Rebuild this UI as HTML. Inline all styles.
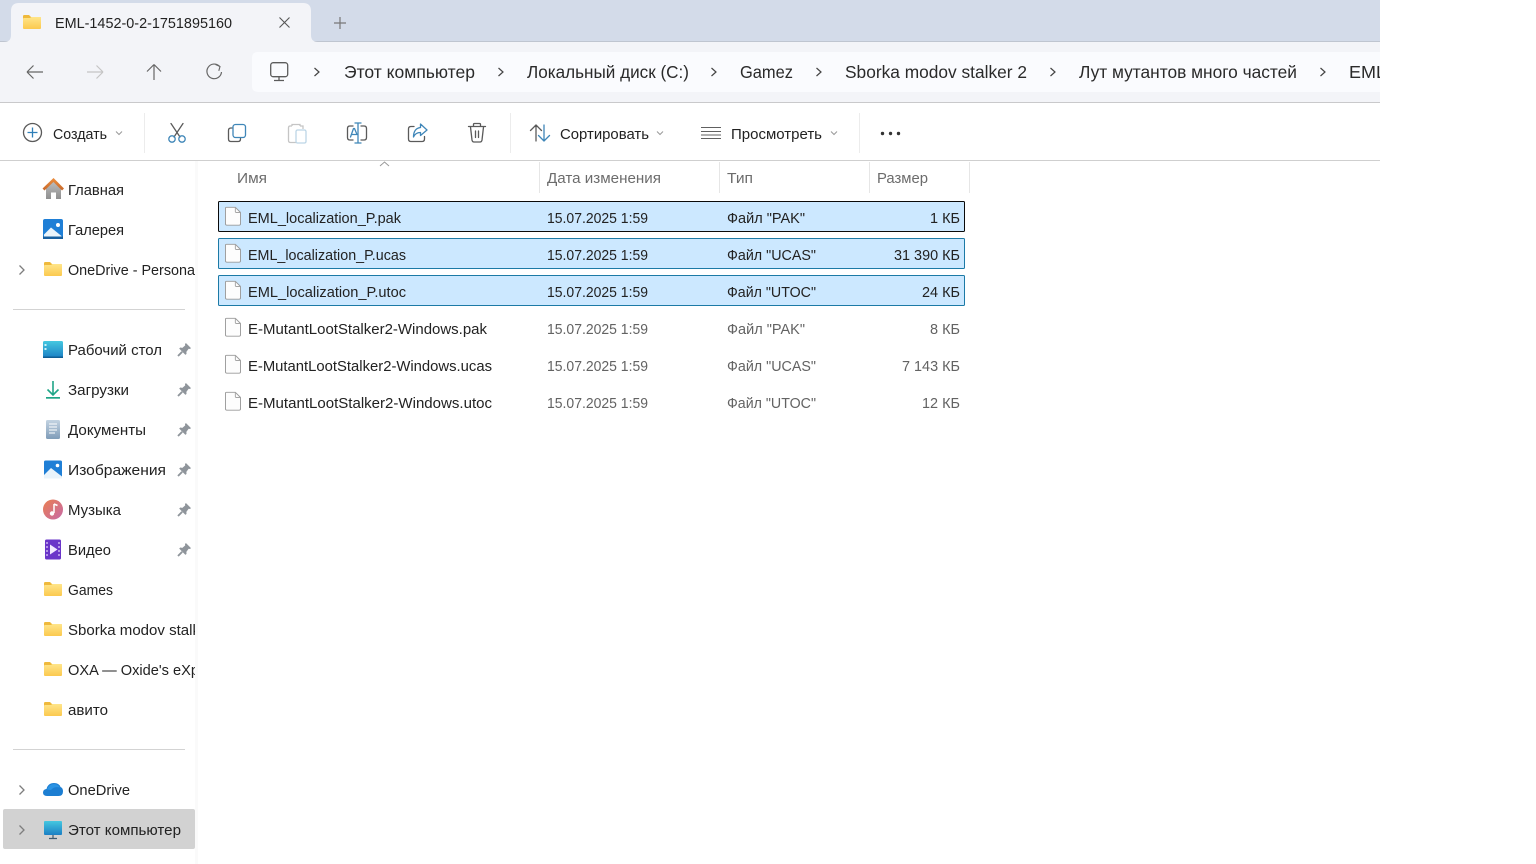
<!DOCTYPE html>
<html lang="ru"><head><meta charset="utf-8"><title>EML-1452-0-2-1751895160</title>
<style>
html,body{margin:0;padding:0;background:#fff;width:1536px;height:864px;overflow:hidden}
svg{display:block}
text{font-family:"Liberation Sans","DejaVu Sans",sans-serif;font-size:14.5px;fill:#222}
.addr{font-size:17.5px;fill:#2a2a2a}
.hd{fill:#6c6c6c}
.g{fill:#636363}
.ic{fill:none;stroke:#5a5a5a;stroke-width:1.3;stroke-linecap:round;stroke-linejoin:round}
.bl{fill:none;stroke:#3f86b8;stroke-width:1.3;stroke-linecap:round;stroke-linejoin:round}
</style></head><body>
<svg width="1536" height="864" viewBox="0 0 1536 864" xmlns="http://www.w3.org/2000/svg">
<defs>
<linearGradient id="fg" x1="0" y1="0" x2="0" y2="1"><stop offset="0" stop-color="#ffe58a"/><stop offset="1" stop-color="#fbc94f"/></linearGradient>
<linearGradient id="mon" x1="0" y1="0" x2="0" y2="1"><stop offset="0" stop-color="#45c8e0"/><stop offset="1" stop-color="#1a7fc4"/></linearGradient>
<linearGradient id="mus" x1="0" y1="0" x2="1" y2="1"><stop offset="0" stop-color="#ea7f50"/><stop offset="1" stop-color="#c76aa8"/></linearGradient>
<linearGradient id="doc" x1="0" y1="0" x2="0" y2="1"><stop offset="0" stop-color="#c3d3e2"/><stop offset="1" stop-color="#7f9cb8"/></linearGradient>
<linearGradient id="roof" x1="0" y1="0" x2="0" y2="1"><stop offset="0" stop-color="#e88a3c"/><stop offset="1" stop-color="#c9692a"/></linearGradient>
<linearGradient id="house" x1="0" y1="0" x2="0" y2="1"><stop offset="0" stop-color="#bdbdbd"/><stop offset="1" stop-color="#8f8f8f"/></linearGradient>
<symbol id="folder" viewBox="0 0 18 14" overflow="visible">
<path d="M0 1.2Q0 0 1.2 0H6L8 2H16.8Q18 2 18 3.2V5H0Z" fill="#efb93c"/>
<path d="M0 4Q0 3 1 3L7 3 8.500 2H17Q18 2 18 3V13Q18 14 17 14H1Q0 14 0 13Z" fill="url(#fg)"/>
</symbol>
<symbol id="file" viewBox="0 0 17 20" overflow="visible">
<path d="M1.500 .5H11L16.500 6V18Q16.500 19.500 15 19.500H2Q.5 19.500 .5 18V1.500Q.5 .5 1.500 .5Z" fill="#fdfdfd" stroke="#9a9a9a" stroke-width="1"/>
<path d="M11 .5V5Q11 6 12 6H16.500" fill="none" stroke="#a5a5a5" stroke-width="1"/>
</symbol>
<symbol id="pin" viewBox="0 0 14 14" overflow="visible">
<path d="M8.500 0L14 5.500 12.800 6.500 11.500 6.200 9 9.500 9.200 11.700 8 12.800 1.300 6 2.400 4.900 4.700 5.200 7.800 2.500 7.500 1.200Z" fill="#8f959b"/>
<path d="M4.500 9.500L0 14" stroke="#8f959b" stroke-width="2"/>
</symbol>
<symbol id="chev" viewBox="0 0 8 12" overflow="visible">
<path d="M1.500 1.500L6 6 1.500 10.500" fill="none" stroke="#7e7e7e" stroke-width="1.300"/>
</symbol>
<symbol id="achev" viewBox="0 0 8 12" overflow="visible">
<path d="M1.500 2L6 6 1.500 10" fill="none" stroke="#444" stroke-width="1.200"/>
</symbol>
<clipPath id="navclip"><rect x="0" y="160" width="195" height="704"/></clipPath>
<clipPath id="winclip"><rect x="0" y="0" width="1380" height="864"/></clipPath>
</defs>

<!-- chrome -->
<rect x="0" y="0" width="1380" height="41" fill="#d3dbe9"/>
<rect x="0" y="41" width="1380" height="1" fill="#bfc5d0"/>
<rect x="0" y="42" width="1380" height="60" fill="#f3f4f8"/>
<rect x="0" y="102" width="1380" height="1" fill="#c9c9cb"/>
<rect x="0" y="160" width="1380" height="1" fill="#cfcfcf"/>

<!-- tab -->
<path d="M4 42Q11 42 11 35V11Q11 3 19 3H303Q311 3 311 11V35Q311 42 318 42Z" fill="#f3f4f8"/>
<use href="#folder" x="23" y="15" width="18" height="14"/>
<text x="55" y="28" textLength="177" lengthAdjust="spacingAndGlyphs">EML-1452-0-2-1751895160</text>
<path d="M279.500 17.500L289.500 27.500M289.500 17.500L279.500 27.500" fill="none" stroke="#555" stroke-width="1.100"/>
<path d="M340 17V29M334 23H346" fill="none" stroke="#777" stroke-width="1.200"/>

<!-- nav buttons -->
<path d="M27 72H43M27 72L33.500 65.500M27 72L33.500 78.500" fill="none" stroke="#666" stroke-width="1.200"/>
<path d="M87 72H103M103 72L96.500 65.500M103 72L96.500 78.500" fill="none" stroke="#c4c4c4" stroke-width="1.200"/>
<path d="M154 80V65M154 64.500L147 71.500M154 64.500L161 71.500" fill="none" stroke="#666" stroke-width="1.200"/>
<path d="M219.500 66.300A7.300 7.300 0 1 0 221.500 72" fill="none" stroke="#666" stroke-width="1.200"/>
<path d="M215.500 64.500L220 66.500 218.800 70.800" fill="none" stroke="#666" stroke-width="1.100"/>

<!-- address bar -->
<path d="M1380 52H258Q252 52 252 58V86Q252 92 258 92H1380Z" fill="#fafbfe"/>
<rect x="270.700" y="62.700" width="17" height="14" rx="2.500" fill="none" stroke="#5c5c5c" stroke-width="1.300"/>
<path d="M279 77V80M274 80.500H284" fill="none" stroke="#5c5c5c" stroke-width="1.300"/>
<g clip-path="url(#winclip)">
<use href="#achev" x="313" y="66" width="8" height="12"/>
<text class="addr" x="344" y="78" textLength="131" lengthAdjust="spacingAndGlyphs">Этот компьютер</text>
<use href="#achev" x="497" y="66" width="8" height="12"/>
<text class="addr" x="527" y="78" textLength="162" lengthAdjust="spacingAndGlyphs">Локальный диск (C:)</text>
<use href="#achev" x="710" y="66" width="8" height="12"/>
<text class="addr" x="740" y="78" textLength="53" lengthAdjust="spacingAndGlyphs">Gamez</text>
<use href="#achev" x="815" y="66" width="8" height="12"/>
<text class="addr" x="845" y="78" textLength="182" lengthAdjust="spacingAndGlyphs">Sborka modov stalker 2</text>
<use href="#achev" x="1049" y="66" width="8" height="12"/>
<text class="addr" x="1079" y="78" textLength="218" lengthAdjust="spacingAndGlyphs">Лут мутантов много частей</text>
<use href="#achev" x="1319" y="66" width="8" height="12"/>
<text class="addr" x="1349" y="78" textLength="37" lengthAdjust="spacingAndGlyphs">EML</text>
</g>

<!-- toolbar -->
<circle cx="32.500" cy="132.500" r="9" fill="none" stroke="#5a5a5a" stroke-width="1.300"/>
<path d="M32.500 127.500V137.500M27.500 132.500H37.500" fill="none" stroke="#2f7fb8" stroke-width="1.300"/>
<text x="53" y="139" textLength="54" lengthAdjust="spacingAndGlyphs">Создать</text>
<path d="M116 131.500L119 134.500 122 131.500" fill="none" stroke="#999" stroke-width="1"/>
<rect x="144" y="113" width="1" height="40" fill="#ececec"/>

<!-- cut -->
<path d="M171 123.500L180 137M183 123.500L174 137" class="ic"/>
<circle cx="172" cy="139" r="3.200" class="bl"/><circle cx="182" cy="139" r="3.200" class="bl"/>
<!-- copy -->
<path d="M232 128H231Q228.500 128 228.500 130.500V139Q228.500 141.500 231 141.500H238Q240.500 141.500 240.500 139V138.500" class="ic"/>
<rect x="233" y="124.500" width="12.500" height="13" rx="2.500" class="bl"/>
<!-- paste -->
<path d="M292 126H290Q288.500 126 288.500 128V140.500Q288.500 142.500 290.500 142.500H296" fill="none" stroke="#c5c5c5" stroke-width="1.300"/>
<path d="M292 126V124.500H300V126M300 126H303V129" fill="none" stroke="#c5c5c5" stroke-width="1.300"/>
<rect x="296" y="130" width="10" height="13" rx="1.500" fill="none" stroke="#bcd5e6" stroke-width="1.300"/>
<!-- rename -->
<path d="M353 126H350Q347.500 126 347.500 128.500V137.500Q347.500 140 350 140H353" class="ic"/>
<path d="M361 126H364Q366.500 126 366.500 128.500V137.500Q366.500 140 364 140H361" class="ic"/>
<path d="M358 123V143M355 123H361M355 143H361" class="bl"/>
<path d="M350.500 137L353.500 128.500H354.500L357 134.500M351.500 134.500H356.500" class="bl"/>
<!-- share -->
<path d="M414 126.500H411Q408.500 126.500 408.500 129V139Q408.500 141.500 411 141.500H422Q424.500 141.500 424.500 139V136.500" class="ic"/>
<path d="M420.500 124L427 130 420.500 135.500V132.500Q415.500 132.500 413.500 137 413.500 128.500 420.500 127.500Z" class="bl"/>
<!-- delete -->
<path d="M468.500 126.500H485.500M473.500 126V124.500Q473.500 123.500 474.500 123.500H479.500Q480.500 123.500 480.500 124.500V126M470.500 127L472 140Q472.300 142 474 142H480Q481.700 142 482 140L483.500 127" class="ic"/>
<path d="M475.500 131V137.500M478.500 131V137.500" class="ic"/>
<rect x="510" y="113" width="1" height="40" fill="#ececec"/>

<!-- sort -->
<path d="M536 141V126M536 125L530.500 130.500M536 125L541.500 130.500" class="ic"/>
<path d="M544 125V140M544 141L538.500 135.500M544 141L549.500 135.500" class="bl"/>
<text x="560" y="139" textLength="89" lengthAdjust="spacingAndGlyphs">Сортировать</text>
<path d="M657 131.500L660 134.500 663 131.500" fill="none" stroke="#999" stroke-width="1"/>
<path d="M701 127.500H721M701 131.500H721M701 135H721M701 138.500H721" fill="none" stroke="#606060" stroke-width="1.100"/>
<text x="731" y="139" textLength="91" lengthAdjust="spacingAndGlyphs">Просмотреть</text>
<path d="M831 131.500L834 134.500 837 131.500" fill="none" stroke="#999" stroke-width="1"/>
<rect x="859" y="113" width="1" height="40" fill="#ececec"/>
<circle cx="882.500" cy="133.500" r="1.700" fill="#333"/><circle cx="890.500" cy="133.500" r="1.700" fill="#333"/><circle cx="898.500" cy="133.500" r="1.700" fill="#333"/>

<!-- nav pane -->
<rect x="195" y="161" width="3" height="703" fill="#fafafa"/>
<g clip-path="url(#navclip)">
<rect x="3" y="809" width="192" height="40" rx="2" fill="#d2d2d2"/>

<!-- home -->
<path d="M46 188V199H51V192.500H56V199H61V188L53.500 181Z" fill="url(#house)"/>
<path d="M43.500 189.500L53.500 180 63 189.500" fill="none" stroke="url(#roof)" stroke-width="2.800"/>
<text x="68" y="195" textLength="56" lengthAdjust="spacingAndGlyphs">Главная</text>

<!-- gallery -->
<rect x="43" y="219" width="20" height="20" rx="2" fill="#1f7fd6"/>
<path d="M44 234.500L51 227.500 61.500 236V237.500H44Z" fill="#eaf4fb"/>
<circle cx="58" cy="225" r="2" fill="#fff"/>
<rect x="43" y="236.500" width="20" height="2.500" fill="#175f9f"/>
<text x="68" y="235" textLength="56" lengthAdjust="spacingAndGlyphs">Галерея</text>

<use href="#chev" x="18" y="264" width="8" height="12"/>
<use href="#folder" x="44" y="262" width="18" height="14"/>
<text x="68" y="275" textLength="127" lengthAdjust="spacingAndGlyphs">OneDrive - Persona</text>

<rect x="13" y="309" width="172" height="1" fill="#d3d3d3"/>

<!-- desktop -->
<rect x="43" y="341" width="20" height="17" rx="1.500" fill="url(#mon)"/>
<rect x="44.500" y="344" width="2" height="2" fill="#cdf2f7"/><rect x="44.500" y="348" width="2" height="2" fill="#cdf2f7"/>
<rect x="43" y="356.500" width="20" height="1.500" fill="#0f5d94"/>
<text x="68" y="355" textLength="94" lengthAdjust="spacingAndGlyphs">Рабочий стол</text>
<use href="#pin" x="178" y="343" width="13" height="13"/>

<!-- downloads -->
<path d="M53 381V395M47.500 389.500L53 395 58.500 389.500" fill="none" stroke="#1fa587" stroke-width="1.600"/>
<rect x="46" y="397" width="14" height="1.700" fill="#1fa587"/>
<text x="68" y="395" textLength="61" lengthAdjust="spacingAndGlyphs">Загрузки</text>
<use href="#pin" x="178" y="383" width="13" height="13"/>

<!-- documents -->
<rect x="46" y="420" width="14" height="19" rx="1.500" fill="url(#doc)"/>
<path d="M49 424H57M49 427H57M49 430H57M49 433H55" stroke="#fff" stroke-width="1"/>
<text x="68" y="435" textLength="78" lengthAdjust="spacingAndGlyphs">Документы</text>
<use href="#pin" x="178" y="423" width="13" height="13"/>

<!-- pictures -->
<rect x="44" y="460.500" width="18" height="18" rx="1.500" fill="#1f7fd6"/>
<path d="M44 475L51 468 62 476.500V478.500H44Z" fill="#eaf4fb"/>
<circle cx="57.500" cy="465.500" r="1.800" fill="#fff"/>
<text x="68" y="475" textLength="98" lengthAdjust="spacingAndGlyphs">Изображения</text>
<use href="#pin" x="178" y="463" width="13" height="13"/>

<!-- music -->
<circle cx="53" cy="509.500" r="10" fill="url(#mus)"/>
<path d="M54 504V513M54 504L57.500 505.500" fill="none" stroke="#fff" stroke-width="1.500"/>
<circle cx="52" cy="513.500" r="2.200" fill="#fff"/>
<text x="68" y="515" textLength="53" lengthAdjust="spacingAndGlyphs">Музыка</text>
<use href="#pin" x="178" y="503" width="13" height="13"/>

<!-- video -->
<rect x="45" y="539.500" width="16" height="20" rx="1.500" fill="#6a35c9"/>
<path d="M50 544.500L57.500 549.500 50 554.500Z" fill="#f2e9ff"/>
<path d="M47 542V557" stroke="#c9b3ef" stroke-width="1.500" stroke-dasharray="2 2"/>
<path d="M59 542V557" stroke="#c9b3ef" stroke-width="1.500" stroke-dasharray="2 2"/>
<text x="68" y="555" textLength="43" lengthAdjust="spacingAndGlyphs">Видео</text>
<use href="#pin" x="178" y="543" width="13" height="13"/>

<use href="#folder" x="44" y="582" width="18" height="14"/>
<text x="68" y="595" textLength="45" lengthAdjust="spacingAndGlyphs">Games</text>
<use href="#folder" x="44" y="622" width="18" height="14"/>
<text x="68" y="635" textLength="132" lengthAdjust="spacingAndGlyphs">Sborka modov stalk</text>
<use href="#folder" x="44" y="662" width="18" height="14"/>
<text x="68" y="675" textLength="131" lengthAdjust="spacingAndGlyphs">OXA — Oxide's eXp</text>
<use href="#folder" x="44" y="702" width="18" height="14"/>
<text x="68" y="715" textLength="40" lengthAdjust="spacingAndGlyphs">авито</text>

<rect x="13" y="749" width="172" height="1" fill="#d3d3d3"/>

<!-- onedrive -->
<path d="M47 796Q43 796 43 792.500 43 789.500 46.500 789 48 783 54 783 59 783 60.500 787 63 787.800 63 791.500 63 796 58.500 796Z" fill="#1c7ed2"/>
<path d="M47 789.500Q49 784 54 784 58 784 60 787.500 54 786 51 790Z" fill="#2a93e4"/>
<use href="#chev" x="18" y="784" width="8" height="12"/>
<text x="68" y="795" textLength="62" lengthAdjust="spacingAndGlyphs">OneDrive</text>

<!-- this pc -->
<use href="#chev" x="18" y="824" width="8" height="12"/>
<rect x="44" y="821" width="18" height="14" rx="1" fill="url(#mon)"/>
<path d="M53 835V838M49 838.500H57" stroke="#3d5a70" stroke-width="1.200"/>
<text x="68" y="835" textLength="113" lengthAdjust="spacingAndGlyphs">Этот компьютер</text>
</g>

<!-- headers -->
<path d="M380 166L384.500 162 389 166" fill="none" stroke="#999" stroke-width="1"/>
<rect x="539" y="162" width="1" height="31" fill="#e6e6e6"/>
<rect x="719" y="162" width="1" height="31" fill="#e6e6e6"/>
<rect x="869" y="162" width="1" height="31" fill="#e6e6e6"/>
<rect x="969" y="162" width="1" height="31" fill="#e6e6e6"/>
<text class="hd" x="237" y="183" textLength="30" lengthAdjust="spacingAndGlyphs">Имя</text>
<text class="hd" x="547" y="183" textLength="114" lengthAdjust="spacingAndGlyphs">Дата изменения</text>
<text class="hd" x="727" y="183" textLength="26" lengthAdjust="spacingAndGlyphs">Тип</text>
<text class="hd" x="877" y="183" textLength="51" lengthAdjust="spacingAndGlyphs">Размер</text>

<!-- rows -->
<rect x="218.500" y="201.500" width="746" height="30" rx="1" fill="#cce8ff" stroke="#0a0a0a"/>
<rect x="218.500" y="238.500" width="746" height="30" rx="1" fill="#cce8ff" stroke="#1c7aa6"/>
<rect x="218.500" y="275.500" width="746" height="30" rx="1" fill="#cce8ff" stroke="#1c7aa6"/>

<use href="#file" x="225" y="206.500" width="16" height="19.500"/>
<text x="248" y="223" textLength="153" lengthAdjust="spacingAndGlyphs">EML_localization_P.pak</text>
<text x="547" y="223" textLength="101" lengthAdjust="spacingAndGlyphs">15.07.2025 1:59</text>
<text x="727" y="223" textLength="78" lengthAdjust="spacingAndGlyphs">Файл "PAK"</text>
<text x="930" y="223" textLength="30" lengthAdjust="spacingAndGlyphs">1 КБ</text>

<use href="#file" x="225" y="243.500" width="16" height="19.500"/>
<text x="248" y="260" textLength="158" lengthAdjust="spacingAndGlyphs">EML_localization_P.ucas</text>
<text x="547" y="260" textLength="101" lengthAdjust="spacingAndGlyphs">15.07.2025 1:59</text>
<text x="727" y="260" textLength="89" lengthAdjust="spacingAndGlyphs">Файл "UCAS"</text>
<text x="894" y="260" textLength="66" lengthAdjust="spacingAndGlyphs">31 390 КБ</text>

<use href="#file" x="225" y="280.500" width="16" height="19.500"/>
<text x="248" y="297" textLength="158" lengthAdjust="spacingAndGlyphs">EML_localization_P.utoc</text>
<text x="547" y="297" textLength="101" lengthAdjust="spacingAndGlyphs">15.07.2025 1:59</text>
<text x="727" y="297" textLength="89" lengthAdjust="spacingAndGlyphs">Файл "UTOC"</text>
<text x="922" y="297" textLength="38" lengthAdjust="spacingAndGlyphs">24 КБ</text>

<use href="#file" x="225" y="317.500" width="16" height="19.500"/>
<text x="248" y="334" textLength="239" lengthAdjust="spacingAndGlyphs">E-MutantLootStalker2-Windows.pak</text>
<text class="g" x="547" y="334" textLength="101" lengthAdjust="spacingAndGlyphs">15.07.2025 1:59</text>
<text class="g" x="727" y="334" textLength="78" lengthAdjust="spacingAndGlyphs">Файл "PAK"</text>
<text class="g" x="930" y="334" textLength="30" lengthAdjust="spacingAndGlyphs">8 КБ</text>

<use href="#file" x="225" y="354.500" width="16" height="19.500"/>
<text x="248" y="371" textLength="244" lengthAdjust="spacingAndGlyphs">E-MutantLootStalker2-Windows.ucas</text>
<text class="g" x="547" y="371" textLength="101" lengthAdjust="spacingAndGlyphs">15.07.2025 1:59</text>
<text class="g" x="727" y="371" textLength="89" lengthAdjust="spacingAndGlyphs">Файл "UCAS"</text>
<text class="g" x="902" y="371" textLength="58" lengthAdjust="spacingAndGlyphs">7 143 КБ</text>

<use href="#file" x="225" y="391.500" width="16" height="19.500"/>
<text x="248" y="408" textLength="244" lengthAdjust="spacingAndGlyphs">E-MutantLootStalker2-Windows.utoc</text>
<text class="g" x="547" y="408" textLength="101" lengthAdjust="spacingAndGlyphs">15.07.2025 1:59</text>
<text class="g" x="727" y="408" textLength="89" lengthAdjust="spacingAndGlyphs">Файл "UTOC"</text>
<text class="g" x="922" y="408" textLength="38" lengthAdjust="spacingAndGlyphs">12 КБ</text>

<!-- right white area -->
<rect x="1380" y="0" width="156" height="864" fill="#fff"/>
</svg>
</body></html>
